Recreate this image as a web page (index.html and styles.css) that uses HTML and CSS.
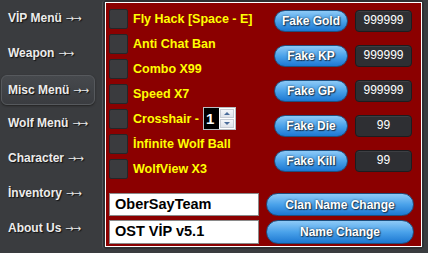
FILE: index.html
```html
<!DOCTYPE html>
<html>
<head lang="en">
    <meta charset="UTF-8">
    <link rel="stylesheet" href="styles.css">
    <title>OST VİP</title>
</head>
<body>
<div id="window">
    <div class="menu">
        <a class="menuItem">VİP Menü <span class="arrow">→→</span></a>
        <a class="menuItem">Weapon <span class="arrow">→→</span></a>
        <a class="menuItem active">Misc Menü <span class="arrow">→→</span></a>
        <a class="menuItem">Wolf Menü <span class="arrow">→→</span></a>
        <a class="menuItem">Character <span class="arrow">→→</span></a>
        <a class="menuItem">İnventory <span class="arrow">→→</span></a>
        <a class="menuItem">About Us <span class="arrow">→→</span></a>
    </div>

    <div class="frame">
        <div class="panel">
            <div class="top">
                <div class="checks">
                    <div class="check"><span class="box"></span>Fly Hack [Space - E]</div>
                    <div class="check"><span class="box"></span>Anti Chat Ban</div>
                    <div class="check"><span class="box"></span>Combo X99</div>
                    <div class="check"><span class="box"></span>Speed X7</div>
                    <div class="check"><span class="box"></span>Crosshair -
                        <span class="spin">
                            <span class="spinValue">1</span>
                            <span class="spinButtons">
                                <span class="spinBtn"><span class="triUp"></span></span>
                                <span class="spinBtn"><span class="triDown"></span></span>
                            </span>
                        </span>
                    </div>
                    <div class="check"><span class="box"></span>İnfinite Wolf Ball</div>
                    <div class="check"><span class="box"></span>WolfView X3</div>
                </div>

                <div class="fakes">
                    <div class="fake"><button class="pill">Fake Gold</button><span class="value">999999</span></div>
                    <div class="fake"><button class="pill">Fake KP</button><span class="value">999999</span></div>
                    <div class="fake"><button class="pill">Fake GP</button><span class="value">999999</span></div>
                    <div class="fake"><button class="pill">Fake Die</button><span class="value">99</span></div>
                    <div class="fake"><button class="pill">Fake Kill</button><span class="value">99</span></div>
                </div>
            </div>

            <div class="bottom">
                <div class="nameRow">
                    <span class="textbox">OberSayTeam</span>
                    <button class="pill wide">Clan Name Change</button>
                </div>
                <div class="nameRow">
                    <span class="textbox tall">OST VİP v5.1</span>
                    <button class="pill wide tall">Name Change</button>
                </div>
            </div>
        </div>
    </div>
</div>
</body>
</html>
```

FILE: styles.css
```css
body {
    margin: 0;
    background: #3a3c3f;
    font-family: "Liberation Sans", Arial, sans-serif;
}
#window {
    display: flex;
    width: 428px;
    height: 253px;
}

/* left menu */
.menu {
    flex: none;
    width: 96px;
    padding: 3px 0 0 1px;
    display: flex;
    flex-direction: column;
    gap: 5px;
}
.menuItem {
    height: 30px;
    display: flex;
    align-items: center;
    padding-left: 6px;
    color: #ececec;
    font-size: 12px;
    font-weight: bold;
    text-shadow: 1px 1px 1px #111;
    border: 1px solid transparent;
    border-radius: 6px;
    box-sizing: border-box;
    width: 94px;
    white-space: nowrap;
    cursor: pointer;
}
.arrow {
    font-family: "DejaVu Sans", sans-serif;
    font-weight: normal;
    font-size: 10px;
    margin-left: 4px;
    letter-spacing: -1px;
}
.active {
    margin-top: 2px;
    margin-bottom: -2px;
    background: linear-gradient(#46494d, #3a3c40);
    border-color: #56595d;
    box-shadow: 0 1px 2px #222;
}

/* main panel */
.frame {
    margin: 0 4px 4px 5px;
    padding: 2px;
    background: #2e3033;
    border-left: 1px solid #505357;
    border-radius: 4px;
    flex: 1;
    min-width: 0;
    display: flex;
}
.panel {
    flex: 1;
    min-width: 0;
    background: #8b0000;
    border: 1px solid #fff;
    padding: 6px 9px 0 3px;
    display: flex;
    flex-direction: column;
}
.top {
    display: flex;
    justify-content: space-between;
}
.checks {
    display: flex;
    flex-direction: column;
    gap: 6px;
}
.check {
    height: 19px;
    display: flex;
    align-items: center;
    color: #ffff00;
    font-size: 12.5px;
    font-weight: bold;
    white-space: nowrap;
}
.box {
    width: 17px;
    height: 18px;
    background: #3a3b3e;
    border: 1px solid #252628;
    border-radius: 2px;
    margin-right: 5px;
}
.spin {
    display: inline-flex;
    margin-left: 4px;
    height: 21px;
    border: 1px solid #b9bcc2;
    background: #fff;
}
.spinValue {
    width: 15px;
    background: #000;
    color: #fff;
    font-size: 15px;
    line-height: 21px;
    padding-left: 2px;
    box-sizing: border-box;
}
.spinButtons {
    display: flex;
    flex-direction: column;
    gap: 1px;
    padding: 1px;
}
.spinBtn {
    width: 14px;
    flex: 1;
    background: linear-gradient(#f4f6f9, #dfe3ea);
    border: 1px solid #c7ccd4;
    box-sizing: border-box;
    display: flex;
    align-items: center;
    justify-content: center;
}
.triUp {
    border-left: 3px solid transparent;
    border-right: 3px solid transparent;
    border-bottom: 3px solid #4a6c9a;
}
.triDown {
    border-left: 3px solid transparent;
    border-right: 3px solid transparent;
    border-top: 3px solid #4a6c9a;
}

.fakes {
    display: flex;
    flex-direction: column;
    gap: 13px;
    padding-top: 1px;
}
.fake {
    display: flex;
    gap: 7px;
}
.pill {
    flex: none;
    width: 74px;
    height: 22px;
    border: 1px solid #1f4f7e;
    border-radius: 12px;
    background: linear-gradient(#8ecaf7, #4aa2ea 50%, #1d78d2);
    color: #fff;
    font-family: "Liberation Sans", Arial, sans-serif;
    font-size: 12px;
    font-weight: bold;
    text-shadow: 0 0 2px #1b3550, 1px 1px 1px #1b3550;
    padding: 0;
    cursor: pointer;
}
.value {
    width: 57px;
    height: 22px;
    box-sizing: border-box;
    background: #2e2f33;
    border: 1px solid #1c1d20;
    border-radius: 4px;
    box-shadow: inset 0 1px 0 #3d3f43;
    color: #fff;
    font-size: 12px;
    text-align: center;
    line-height: 18px;
}

.bottom {
    margin-top: auto;
    margin-bottom: 2px;
    display: flex;
    flex-direction: column;
    gap: 4px;
}
.nameRow {
    display: flex;
    gap: 7px;
}
.textbox {
    flex: none;
    width: 150px;
    height: 23px;
    box-sizing: border-box;
    background: #fff;
    border: 1px solid #8a8a8a;
    padding-left: 5px;
    font-size: 14.5px;
    font-weight: bold;
    line-height: 21px;
    color: #000;
}
.wide {
    width: 148px;
    height: 23px;
}
.tall {
    height: 24px;
}
```
